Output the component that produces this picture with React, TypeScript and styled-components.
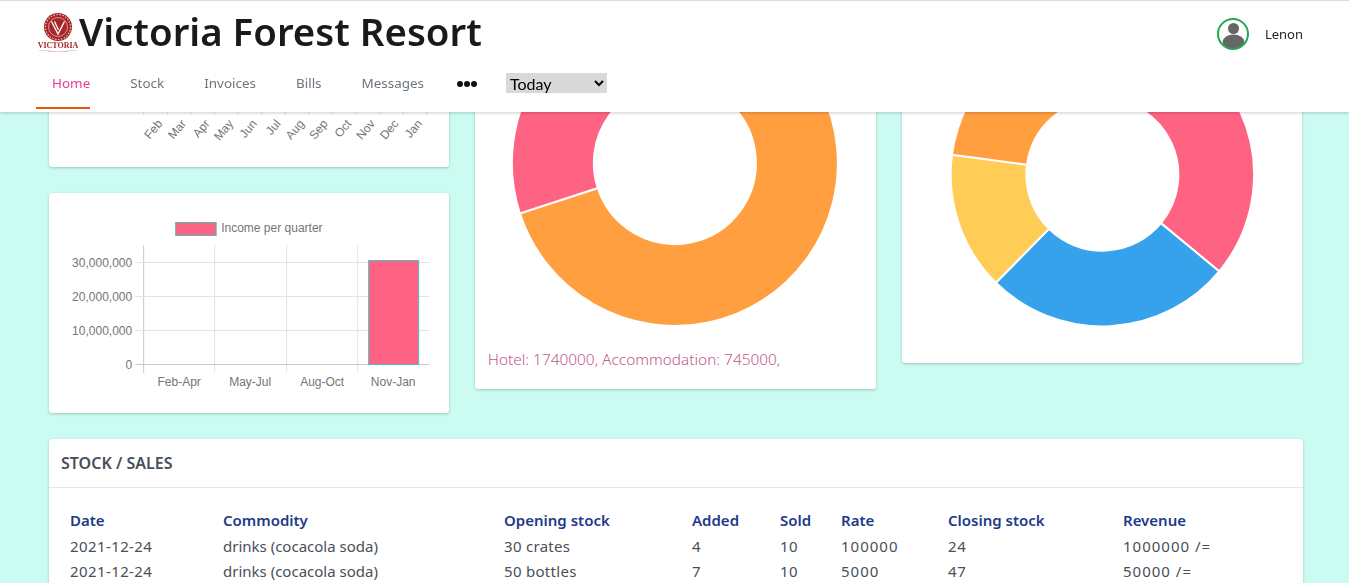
import styled, { createGlobalStyle } from 'styled-components'

const UI_FONT = '"Noto Sans", "Open Sans", sans-serif'
const CHART_FONT = '"Liberation Sans", Arial, sans-serif'

const GlobalStyle = createGlobalStyle`
    html, body {
        margin: 0;
        padding: 0;
        height: 100%;
        overflow: hidden;
        background: #cbfbf1;
        font-family: ${UI_FONT};
    }
`;

const Header = styled.header`
    position: fixed;
    top: 0;
    left: 0;
    right: 0;
    height: 111px;
    z-index: 10;
    background: #fff;
    border-top: 1px solid #dcdcdc;
    box-shadow: 0 1px 3px rgba(0, 0, 0, 0.2);
`;

const TopRow = styled.div`
    display: flex;
    align-items: center;
    height: 62px;
    padding: 0 46px 0 38px;
`;

const Title = styled.h1`
    flex: 1;
    margin: 0 0 2px 1px;
    font-size: 38.4px;
    font-weight: 600;
    line-height: 60px;
    color: #1a1a1a;
    white-space: nowrap;
`;

const User = styled.div`
    display: flex;
    align-items: center;
    gap: 16px;
    margin: 3px 0 0 -1px;
    font-size: 13px;
    color: #212529;
`;

const Nav = styled.nav`
    display: flex;
    align-items: flex-start;
    height: 48px;
    padding-left: 36px;
`;

const NavLink = styled.a<{ $active?: boolean }>`
    display: block;
    height: 46px;
    margin-right: 40px;
    padding-left: ${p => (p.$active ? '16px' : '0')};
    padding-top: 10px;
    box-sizing: border-box;
    font-size: 13.45px;
    line-height: 21px;
    color: ${p => (p.$active ? '#e83e8c' : '#6c757d')};
    border-bottom: 2px solid ${p => (p.$active ? '#e8590c' : 'transparent')};
`;

const Dots = styled.span`
    display: flex;
    gap: 1px;
    margin: 18px 29px 0 -7px;
`;

const Dot = styled.i`
    width: 6px;
    height: 6px;
    border-radius: 50%;
    background: #111;
`;

const RangeSelect = styled.select`
    width: 101px;
    height: 20px;
    margin-top: 10px;
    padding: 0;
    box-sizing: border-box;
    border: none;
    border-radius: 0;
    background-color: #d9d9d9;
    color: #000;
    font-family: "Lato", ${UI_FONT};
    font-size: 16px;
`;

const Main = styled.main`
    padding: 0 46px 0 49px;
`;

const Grid = styled.div`
    display: grid;
    grid-template-columns: repeat(3, 1fr);
    gap: 26px;
    align-items: start;
    margin-right: 1px;
`;

const Column = styled.div`
    display: flex;
    flex-direction: column;
    gap: 26px;
`;

const Card = styled.section<{ $height?: number }>`
    height: ${p => (p.$height ? `${p.$height}px` : 'auto')};
    background: #fff;
    border-radius: 3px;
    box-shadow: 0 1px 3px rgba(0, 0, 0, 0.22);
    overflow: hidden;
`;

const Chart = styled.svg`
    display: block;
    width: 100%;
    font-family: ${CHART_FONT};
`;

const Caption = styled.p`
    margin: 0;
    padding: 8px 12.5px 0;
    font-size: 15.4px;
    font-weight: 300;
    line-height: 24px;
    color: #c2598c;
`;

const TableCard = styled(Card)`
    margin-top: 26px;
`;

const CardTitle = styled.h2`
    margin: 0;
    height: 49px;
    padding: 0 12px;
    box-sizing: border-box;
    border-bottom: 1px solid #e3e6e8;
    font-size: 16px;
    font-weight: 600;
    line-height: 49px;
    color: #495057;
`;

const StockTable = styled.table`
    margin: 19px 0 0 21px;
    border-collapse: collapse;
    table-layout: fixed;
    width: 1200px;
    font-size: 15px;
`;

const Th = styled.th<{ $width: number }>`
    width: ${p => p.$width}px;
    padding: 0;
    height: 26px;
    text-align: left;
    font-weight: 600;
    color: #1e3a8a;
`;

const Td = styled.td<{ $spacing: number }>`
    padding: 0;
    height: 25.5px;
    letter-spacing: ${p => p.$spacing}px;
    color: #495057;
`;

// the last value is the letter-spacing of the column's cells: the digits of the original font are wider
const columns: [string, number, number][] = [
    ['Date', 153, 0.4],
    ['Commodity', 281, 0],
    ['Opening stock', 188, 0.3],
    ['Added', 88, 0],
    ['Sold', 61, 0.5],
    ['Rate', 107, 1],
    ['Closing stock', 175, 0.7],
    ['Revenue', 147, 1],
]

const rows = [
    ['2021-12-24', 'drinks (cocacola soda)', '30 crates', '4', '10', '100000', '24', '1000000 /='],
    ['2021-12-24', 'drinks (cocacola soda)', '50 bottles', '7', '10', '5000', '47', '50000 /='],
]

const months = ['Feb', 'Mar', 'Apr', 'May', 'Jun', 'Jul', 'Aug', 'Sep', 'Oct', 'Nov', 'Dec', 'Jan']

// angles are clockwise from the top, the way chart.js lays out its arcs
function arcPath(cx: number, cy: number, outer: number, inner: number, from: number, to: number) {
    const pt = (r: number, deg: number) => {
        const a = (deg * Math.PI) / 180
        return `${(cx + r * Math.sin(a)).toFixed(2)} ${(cy - r * Math.cos(a)).toFixed(2)}`
    }
    const large = to - from > 180 ? 1 : 0
    return `M${pt(outer, from)} A${outer} ${outer} 0 ${large} 1 ${pt(outer, to)} L${pt(inner, to)} A${inner} ${inner} 0 ${large} 0 ${pt(inner, from)} Z`
}

function Donut({ cx, cy, outer, inner, height, slices }: {
    cx: number, cy: number, outer: number, inner: number, height: number,
    slices: { from: number, to: number, color: string }[]
}) {
    return (
        <Chart height={height} viewBox={`0 0 400 ${height}`}>
            {slices.map(s => (
                <path key={s.from} d={arcPath(cx, cy, outer, inner, s.from, s.to)} fill={s.color} stroke="#fff" strokeWidth="2" />
            ))}
        </Chart>
    )
}

function Logo() {
    return (
        <svg width="40" height="42" viewBox="0 0 40 42">
            <circle cx="20" cy="16" r="14" fill="#a8262a" />
            <circle cx="20" cy="16" r="12.5" fill="none" stroke="#e9c4c0" strokeWidth="1.2" strokeDasharray="1.5 1.5" />
            <circle cx="20" cy="16" r="9.5" fill="#a8262a" stroke="#e9c4c0" strokeWidth="0.7" />
            <path d="M13.5 10.5 L20 23 L26.5 10.5 M16.5 10.5 L20.5 19" fill="none" stroke="#fff" strokeWidth="1.3" />
            <text x="20" y="36.5" textAnchor="middle" fontFamily="Liberation Serif, serif" fontWeight="700" fontSize="8" fill="#a8262a">VICTORIA</text>
            <path d="M1 39.5 H12 M28 39.5 H39" stroke="#d9a5a5" strokeWidth="0.5" />
            <text x="20" y="41" textAnchor="middle" fontFamily="Liberation Serif, serif" fontSize="2.6" fill="#a8262a">FOREST RESORT</text>
        </svg>
    )
}

function Avatar() {
    return (
        <svg width="32" height="32" viewBox="0 0 32 32">
            <defs>
                <clipPath id="avatar-clip"><circle cx="16" cy="16" r="14.5" /></clipPath>
            </defs>
            <circle cx="16" cy="16" r="15" fill="#fff" />
            <g clipPath="url(#avatar-clip)" fill="#666">
                <circle cx="16.5" cy="10.5" r="5.5" />
                <ellipse cx="16.5" cy="24" rx="11" ry="7.5" />
            </g>
            <circle cx="16" cy="16" r="15" fill="none" stroke="#22a652" strokeWidth="2" />
        </svg>
    )
}

function MonthlyChart() {
    const ticks = Array.from({ length: 13 }, (_, i) => 94.5 + i * 23.6)
    return (
        <Chart height={167} viewBox="0 0 400 167">
            {ticks.map(x => (
                <line key={x} x1={x} x2={x} y1="100" y2="115" stroke="#e3e3e3" />
            ))}
            {months.map((m, i) => (
                <text key={m} fontSize="12" fill="#757575" textAnchor="end"
                    transform={`translate(${ticks[i] + 19.5} 124) rotate(-50)`}>{m}</text>
            ))}
        </Chart>
    )
}

function QuarterChart() {
    const vLines = [94.5, 165.5, 237.5, 308.5]
    const hLines = [{ y: 69.5, t: '30,000,000' }, { y: 103.5, t: '20,000,000' }, { y: 137.5, t: '10,000,000' }, { y: 171.5, t: '0' }]
    const labels = [{ x: 130, t: 'Feb-Apr' }, { x: 201, t: 'May-Jul' }, { x: 273, t: 'Aug-Oct' }, { x: 344, t: 'Nov-Jan' }]
    return (
        <Chart height={220} viewBox="0 0 400 220">
            <rect x="126.5" y="29.5" width="40.5" height="13" fill="#ff6384" stroke="#4bc0c0" />
            <text x="172" y="39" fontSize="12" fill="#757575">Income per quarter</text>
            {vLines.map((x, i) => (
                <line key={x} x1={x} x2={x} y1="52" y2="180" stroke={i === 0 ? '#c9c9c9' : '#e3e3e3'} />
            ))}
            {hLines.map((h, i) => (
                <g key={h.t}>
                    <line x1="86" x2="380" y1={h.y} y2={h.y} stroke={i === 3 ? '#c9c9c9' : '#e3e3e3'} />
                    <text x="83" y={h.y + 4} fontSize="12" fill="#757575" textAnchor="end">{h.t}</text>
                </g>
            ))}
            <rect x="319.5" y="67.5" width="50" height="104" fill="#ff6384" stroke="#4bc0c0" />
            {labels.map(l => (
                <text key={l.t} x={l.x} y="193" fontSize="12" fill="#757575" textAnchor="middle">{l.t}</text>
            ))}
        </Chart>
    )
}

export default function App() {
    return (
        <>
            <GlobalStyle />
            <Header>
                <TopRow>
                    <Logo />
                    <Title>Victoria Forest Resort</Title>
                    <User>
                        <Avatar />
                        Lenon
                    </User>
                </TopRow>
                <Nav>
                    <NavLink $active>Home</NavLink>
                    <NavLink>Stock</NavLink>
                    <NavLink>Invoices</NavLink>
                    <NavLink>Bills</NavLink>
                    <NavLink>Messages</NavLink>
                    <Dots><Dot /><Dot /><Dot /></Dots>
                    <RangeSelect defaultValue="today">
                        <option value="today">Today</option>
                    </RangeSelect>
                </Nav>
            </Header>
            <Main>
                <Grid>
                    <Column>
                        <Card $height={167}><MonthlyChart /></Card>
                        <Card $height={220}><QuarterChart /></Card>
                    </Column>
                    <Card $height={389}>
                        <Donut cx={199.7} cy={163} outer={163} inner={81} height={340} slices={[
                            { from: 0, to: 252, color: '#ff9f40' },
                            { from: 252, to: 360, color: '#ff6384' },
                        ]} />
                        <Caption>Hotel: 1740000, Accommodation: 745000,</Caption>
                    </Card>
                    <Card $height={363}>
                        <Donut cx={200.2} cy={174.7} outer={151.7} inner={76} height={363} slices={[
                            { from: 0, to: 129.6, color: '#ff6384' },
                            { from: 129.6, to: 224.6, color: '#36a2eb' },
                            { from: 224.6, to: 277.6, color: '#ffcd56' },
                            { from: 277.6, to: 360, color: '#ff9f40' },
                        ]} />
                    </Card>
                </Grid>
                <TableCard>
                    <CardTitle>STOCK / SALES</CardTitle>
                    <StockTable>
                        <thead>
                            <tr>
                                {columns.map(([name, width]) => <Th key={name} $width={width}>{name}</Th>)}
                            </tr>
                        </thead>
                        <tbody>
                            {rows.map((row, i) => (
                                <tr key={i}>
                                    {row.map((cell, j) => <Td key={j} $spacing={columns[j][2]}>{cell}</Td>)}
                                </tr>
                            ))}
                        </tbody>
                    </StockTable>
                </TableCard>
            </Main>
        </>
    )
}
